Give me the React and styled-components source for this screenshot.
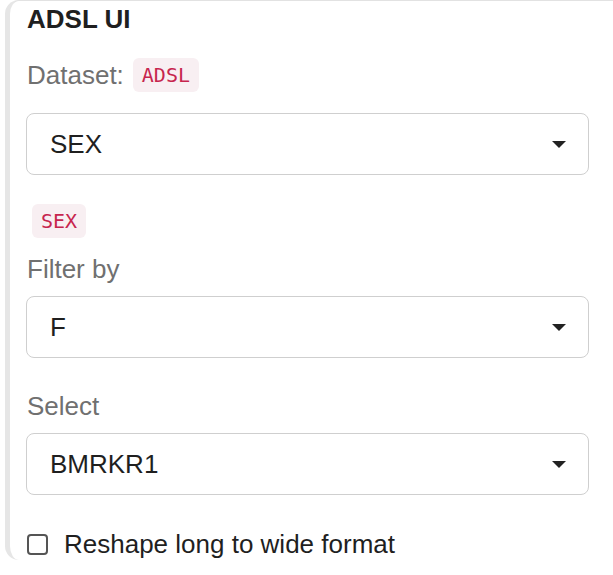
import styled, { createGlobalStyle } from 'styled-components';

const GlobalStyle = createGlobalStyle`
  body {
    margin: 0;
    background: #ffffff;
    font-family: "Liberation Sans", Arial, sans-serif;
    overflow: hidden;
  }
`;

function Caret() {
  return (
    <svg width="14" height="7" viewBox="0 0 14 7">
      <path d="M0 0 L14 0 L7 7 Z" fill="#222" />
    </svg>
  );
}

function SelectBox({ value }) {
  return (
    <Select>
      <span>{value}</span>
      <Caret />
    </Select>
  );
}

export default function App() {
  return (
    <>
      <GlobalStyle />
      <Card>
        <Title>ADSL UI</Title>
        <Label $top={23} $bottom={21}>
          <span>Dataset:</span>
          <Code>ADSL</Code>
        </Label>
        <SelectBox value="SEX" />
        <BadgeRow>
          <Code>SEX</Code>
        </BadgeRow>
        <Label $top={14} $bottom={10}>Filter by</Label>
        <SelectBox value="F" />
        <Label $top={31} $bottom={10}>Select</Label>
        <SelectBox value="BMRKR1" />
        <CheckRow>
          <Box />
          <span>Reshape long to wide format</span>
        </CheckRow>
      </Card>
    </>
  );
}

const Card = styled.div`
  margin-left: 5px;
  width: 608px;
  height: 560px;
  box-sizing: border-box;
  border-left: 5px solid #e6e6e6;
  border-top: 1px solid #e2e2e2;
  border-top-left-radius: 14px;
  border-bottom-left-radius: 14px;
  padding: 3px 0 0 16px;
  display: flex;
  flex-direction: column;
  align-items: flex-start;
`;

const Title = styled.div`
  font-size: 26px;
  font-weight: bold;
  line-height: 31px;
  color: #1f1f1f;
  margin-left: 1px;
  flex-shrink: 0;
`;

const Label = styled.div`
  font-size: 26px;
  line-height: 34px;
  color: #707070;
  margin-top: ${(p) => p.$top}px;
  margin-bottom: ${(p) => p.$bottom}px;
  margin-left: 1px;
  display: flex;
  align-items: center;
  gap: 9px;
  flex-shrink: 0;
`;

const Code = styled.span`
  font-family: "DejaVu Sans Mono", "Liberation Mono", monospace;
  font-size: 20px;
  line-height: 34px;
  height: 34px;
  color: #c7254e;
  background: #f8eff2;
  border-radius: 6px;
  padding: 0 9px;
  display: inline-block;
`;

const BadgeRow = styled.div`
  margin-top: 29px;
  margin-left: 6px;
  display: flex;
  flex-shrink: 0;
`;

const Select = styled.div`
  width: 563px;
  height: 62px;
  flex-shrink: 0;
  box-sizing: border-box;
  border: 1px solid #cfcfcf;
  border-radius: 8px;
  padding: 0 22px 0 23px;
  display: flex;
  align-items: center;
  justify-content: space-between;
  font-size: 26px;
  color: #1f1f1f;
`;

const CheckRow = styled.label`
  margin-top: 34px;
  margin-left: 1px;
  display: flex;
  align-items: center;
  gap: 16px;
  font-size: 26px;
  line-height: 30px;
  color: #1f1f1f;
  flex-shrink: 0;
`;

const Box = styled.span`
  width: 21px;
  height: 21px;
  box-sizing: border-box;
  border: 2px solid #555;
  border-radius: 4px;
`;
